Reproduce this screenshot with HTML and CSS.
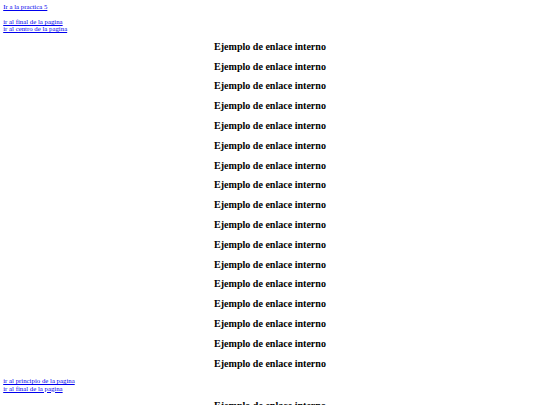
FILE: index.html
```html
<!DOCTYPE html>
<html lang="es">
<head>
<meta charset="utf-8">
<title>Enlaces internos</title>
<link rel="stylesheet" href="styles.css">
</head>
<body>
<a class="link" href="#">Ir a la practica 5</a>
<br><br>
<a class="link" href="#final">ir al final de la pagina</a><br>
<a class="link" href="#centro">ir al centro de la pagina</a>
<h2 class="title">Ejemplo de enlace interno</h2>
<h2 class="title">Ejemplo de enlace interno</h2>
<h2 class="title">Ejemplo de enlace interno</h2>
<h2 class="title">Ejemplo de enlace interno</h2>
<h2 class="title">Ejemplo de enlace interno</h2>
<h2 class="title">Ejemplo de enlace interno</h2>
<h2 class="title">Ejemplo de enlace interno</h2>
<h2 class="title">Ejemplo de enlace interno</h2>
<h2 class="title">Ejemplo de enlace interno</h2>
<h2 class="title">Ejemplo de enlace interno</h2>
<h2 class="title">Ejemplo de enlace interno</h2>
<h2 class="title">Ejemplo de enlace interno</h2>
<h2 class="title">Ejemplo de enlace interno</h2>
<h2 class="title">Ejemplo de enlace interno</h2>
<h2 class="title">Ejemplo de enlace interno</h2>
<h2 class="title">Ejemplo de enlace interno</h2>
<h2 class="title">Ejemplo de enlace interno</h2>
<a class="link" id="centro" href="#">ir al principio de la pagina</a><br>
<a class="link" href="#final">ir al final de la pagina</a>
<h2 class="title">Ejemplo de enlace interno</h2>
<h2 class="title">Ejemplo de enlace interno</h2>
<h2 class="title">Ejemplo de enlace interno</h2>
<h2 class="title" id="final">Ejemplo de enlace interno</h2>
</body>
</html>
```
FILE: styles.css
```css
html {
  background: #ffffff;
}
body {
  margin: 3.2px;
  font-family: "Liberation Serif", "Times New Roman", serif;
  font-size: 6.8px;
  line-height: 7.4px;
  color: #000000;
}
.link {
  color: #0000ee;
  text-decoration: underline;
}
.title {
  font-size: 10.05px;
  line-height: 11.8px;
  font-weight: bold;
  text-align: center;
  margin: 8px 0;
}
```
